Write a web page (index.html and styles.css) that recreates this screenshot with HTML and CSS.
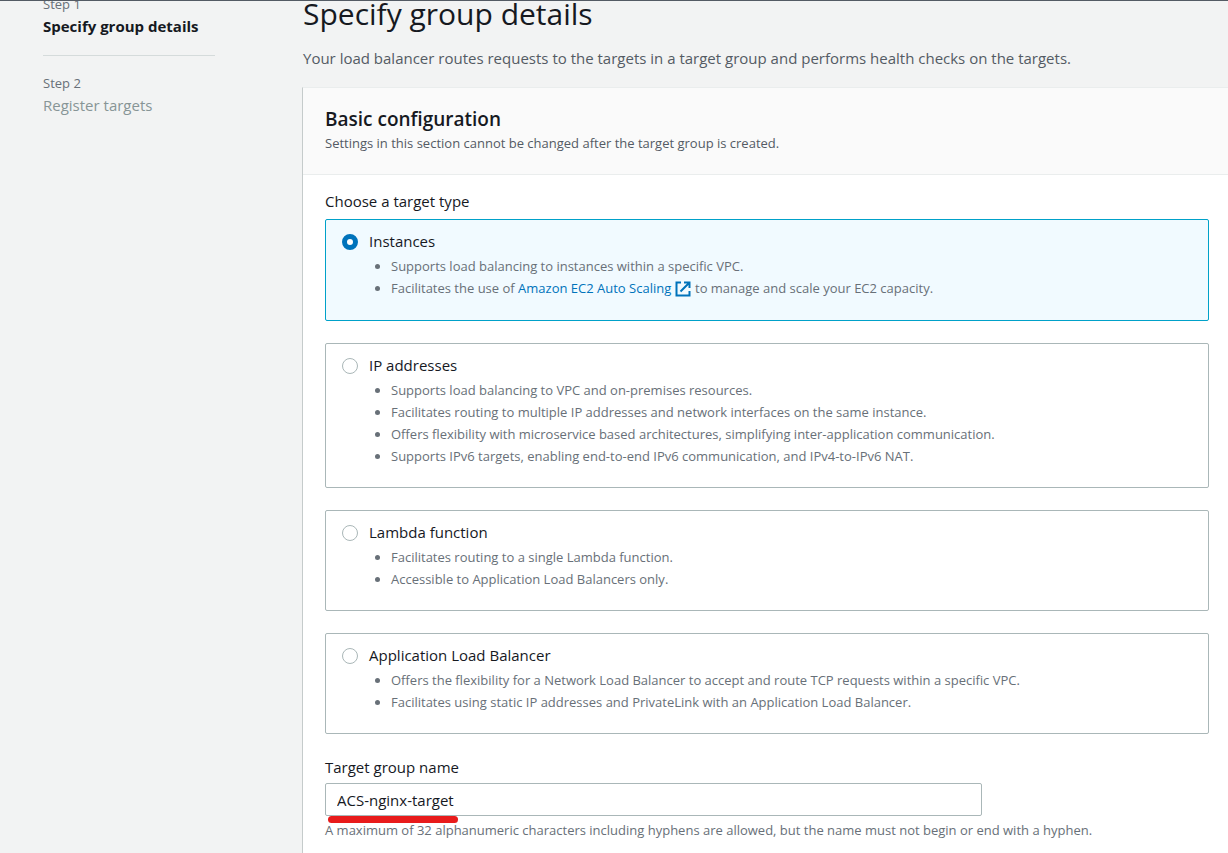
FILE: index.html
```html
<!DOCTYPE html>
<html lang="en">
<head>
<meta charset="utf-8">
<title>Specify group details</title>
<link rel="stylesheet" href="styles.css">
</head>
<body>
<div class="page">
  <nav class="steps" aria-label="Steps">
    <ol class="step-list">
      <li class="step">
        <span class="step-number">Step 1</span>
        <span class="step-title step-title-current" aria-current="step">Specify group details</span>
      </li>
      <li class="step">
        <span class="step-number">Step 2</span>
        <span class="step-title">Register targets</span>
      </li>
    </ol>
  </nav>
  <main class="main">
    <h1 class="title">Specify group details</h1>
    <p class="intro">Your load balancer routes requests to the targets in a target group and performs health checks on the targets.</p>
    <section class="panel">
      <header class="panel-header">
        <h2 class="panel-title">Basic configuration</h2>
        <p class="panel-note">Settings in this section cannot be changed after the target group is created.</p>
      </header>
      <form class="panel-body">
        <fieldset class="types">
          <legend class="label">Choose a target type</legend>
          <div class="tiles">
            <div class="tile">
              <input class="radio" type="radio" name="type" id="instances" checked>
              <div class="tile-content">
                <label class="tile-label" for="instances">Instances</label>
                <ul class="features">
                  <li>Supports load balancing to instances within a specific VPC.</li>
                  <li>Facilitates the use of <a class="link" href="#">Amazon EC2 Auto Scaling <svg class="external" viewBox="0 0 16 16" aria-hidden="true"><path d="M6 1.500H1.500v13h13V10" /><path d="M9 1.500h5.500V7M14.500 1.500 5.500 10.500" /></svg></a> to manage and scale your EC2 capacity.</li>
                </ul>
              </div>
            </div>
            <div class="tile">
              <input class="radio" type="radio" name="type" id="ip">
              <div class="tile-content">
                <label class="tile-label" for="ip">IP addresses</label>
                <ul class="features">
                  <li>Supports load balancing to VPC and on-premises resources.</li>
                  <li>Facilitates routing to multiple IP addresses and network interfaces on the same instance.</li>
                  <li>Offers flexibility with microservice based architectures, simplifying inter-application communication.</li>
                  <li>Supports IPv6 targets, enabling end-to-end IPv6 communication, and IPv4-to-IPv6 NAT.</li>
                </ul>
              </div>
            </div>
            <div class="tile">
              <input class="radio" type="radio" name="type" id="lambda">
              <div class="tile-content">
                <label class="tile-label" for="lambda">Lambda function</label>
                <ul class="features">
                  <li>Facilitates routing to a single Lambda function.</li>
                  <li>Accessible to Application Load Balancers only.</li>
                </ul>
              </div>
            </div>
            <div class="tile">
              <input class="radio" type="radio" name="type" id="alb">
              <div class="tile-content">
                <label class="tile-label" for="alb">Application Load Balancer</label>
                <ul class="features">
                  <li>Offers the flexibility for a Network Load Balancer to accept and route TCP requests within a specific VPC.</li>
                  <li>Facilitates using static IP addresses and PrivateLink with an Application Load Balancer.</li>
                </ul>
              </div>
            </div>
          </div>
        </fieldset>
        <div class="field">
          <label class="label" for="name">Target group name</label>
          <div class="name-box">
            <input class="name-input" type="text" id="name" value="ACS-nginx-target" aria-describedby="hint">
            <span class="marker"></span>
          </div>
          <p class="hint" id="hint">A maximum of 32 alphanumeric characters including hyphens are allowed, but the name must not begin or end with a hyphen.</p>
        </div>
      </form>
    </section>
  </main>
</div>
</body>
</html>
```
FILE: styles.css
```css
* { box-sizing: border-box; }

body {
  margin: 0;
  font-family: "Open Sans", "Noto Sans", sans-serif;
  font-size: 15px;
  line-height: 22px;
  color: #16191f;
  background: #f2f3f3;
}

h1, h2, p, ul, ol { margin: 0; padding: 0; }

.page {
  display: flex;
  height: 100vh;
  overflow: hidden;
  border-top: 1px solid #545b64;
}

.steps {
  flex: none;
  width: 302px;
  padding: 0 87px 0 43px;
  margin-top: -8px;
}

.step-list { list-style: none; }

.step {
  display: flex;
  flex-direction: column;
}

.step + .step {
  margin-top: 18px;
  padding-top: 16px;
  border-top: 1px solid #d5dbdb;
}

.step-number {
  font-size: 13px;
  color: #687078;
}

.step-title { color: #879596; }

.step-title-current {
  font-weight: 700;
  color: #16191f;
}

.main {
  flex: 1;
  min-width: 0;
}

.title {
  margin-top: -5px;
  padding-left: 1px;
  font-size: 30px;
  font-weight: 400;
  line-height: 36px;
}

.intro {
  padding: 15px 0 18px 1px;
  color: #545b64;
}

.panel {
  background: #fff;
  border-top: 1px solid #eaeded;
  border-left: 1px solid #c5cbcb;
}

.panel-header {
  display: flex;
  flex-direction: column;
  gap: 2px;
  padding: 20px 22px;
  background: #fafafa;
  border-bottom: 1px solid #eaeded;
}

.panel-title {
  font-size: 19px;
  font-weight: 600;
  line-height: 22px;
}

.panel-note {
  font-size: 13px;
  color: #545b64;
}

.panel-body {
  display: flex;
  flex-direction: column;
  gap: 22px;
  padding: 15px 19px 22px 22px;
}

.types {
  min-width: 0;
  margin: 0;
  padding: 0;
  border: 0;
}

.label {
  display: block;
  padding: 0;
}

.tiles {
  display: flex;
  flex-direction: column;
  gap: 22px;
  padding-top: 7px;
}

.tile {
  display: flex;
  gap: 11px;
  padding: 11px 16px 19px;
  border: 1px solid #aab7b8;
  border-radius: 2px;
}

.tile:has(.radio:checked) {
  background: #f1faff;
  border-color: #00a1c9;
}

.radio {
  appearance: none;
  flex: none;
  width: 16px;
  height: 16px;
  margin: 3px 0;
  background: #fff;
  border: 1px solid #aab7b8;
  border-radius: 50%;
}

.radio:checked { border: 5px solid #0073bb; }

.tile-content {
  display: flex;
  flex-direction: column;
  gap: 3px;
}

.tile-label { margin-top: -1px; }

.features {
  padding-left: 22px;
  font-size: 13px;
  color: #687078;
}

.tile-label + .features { padding-bottom: 1px; }

.link {
  color: #0073bb;
  text-decoration: none;
}

.external {
  width: 16px;
  height: 16px;
  margin: 0 1px 3px 0;
  vertical-align: -7px;
  fill: none;
  stroke: currentColor;
  stroke-width: 2;
}

.name-box {
  position: relative;
  width: calc(75% - 6px);
  margin: 5px 0 3px;
}

.name-input {
  display: block;
  width: 100%;
  height: 33px;
  padding: 0 11px;
  font: inherit;
  color: #16191f;
  background: #fff;
  border: 1px solid #aab7b8;
  border-radius: 2px;
}

.marker {
  position: absolute;
  left: 3px;
  bottom: -7px;
  width: 130px;
  height: 7px;
  border-radius: 4px;
  background: #e81b1b;
}

.hint {
  font-size: 13px;
  color: #687078;
}
```
